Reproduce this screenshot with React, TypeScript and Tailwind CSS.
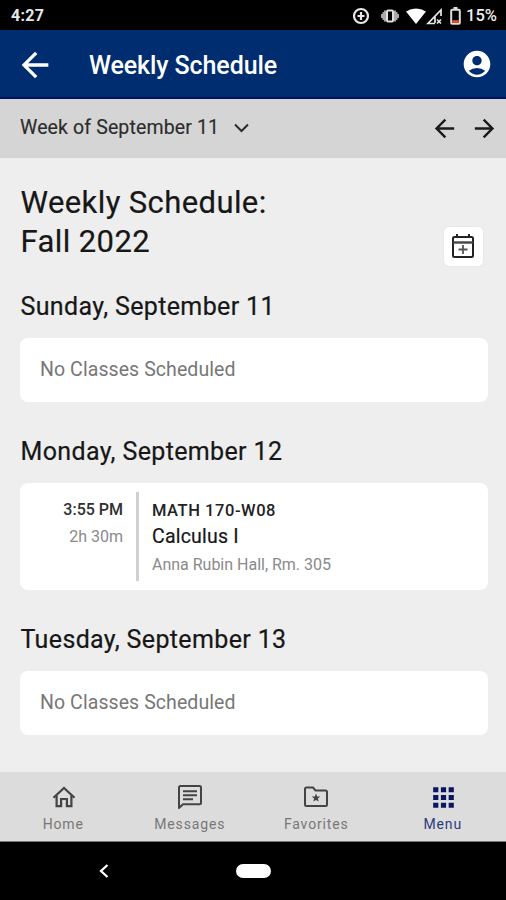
import type { ReactNode } from "react";
import { MdAccountCircle, MdApps, MdArrowBack, MdArrowForward } from "react-icons/md";

function StatusBar() {
  return (
    <div className="flex h-[30px] shrink-0 items-center justify-between bg-black pt-[2px] pr-[9px] pl-[11px] text-white">
      <span className="text-[16px] leading-[28px] font-bold tracking-[0.3px] text-[#e8e8e8]">4:27</span>
      <div className="flex h-[28px] items-center">
        <svg className="mr-[11px]" width="18" height="18" viewBox="0 0 18 18" fill="none" stroke="#e8e8e8">
          <circle cx="9" cy="9" r="7" strokeWidth="2.2" />
          <path d="M9 5v8M5.500 9h7" strokeWidth="2.200" />
        </svg>
        <svg className="mr-[7px]" width="18" height="14" viewBox="0 0 18 14">
          <path d="M5 1.500v11H3V11H1.500V9H0V5h1.500V3H3V1.500zM13 1.500v11h2V11h1.500V9H18V5h-1.500V3H15V1.500z" fill="#aaa" />
          <rect x="6" y="1.500" width="6" height="11" rx="1" fill="none" stroke="#e0e0e0" strokeWidth="2" />
        </svg>
        <svg width="20" height="17" viewBox="0 0 20 17" fill="#fff">
          <path d="M0 3.500Q10-2.500 20 3.500L10 16Z" />
        </svg>
        <svg className="mr-[7px]" width="17" height="17" viewBox="0 0 17 17" fill="none" stroke="#e8e8e8" strokeWidth="1.700">
          <path d="M15 8V2L2 15.500h7M9 9v6" />
          <path d="M11 11.500l4 4M15 11.500l-4 4" />
        </svg>
        <svg className="mr-[5px]" width="11" height="18" viewBox="0 0 11 18">
          <path d="M3.500 0h4v3h-4z" fill="#ddd" />
          <rect x="1.200" y="2.700" width="8.600" height="14" rx="1" fill="none" stroke="#ddd" strokeWidth="2" />
          <path d="M2.200 13.200h6.600V15.800H2.200z" fill="#e9532f" />
        </svg>
        <span className="text-[16.500px] leading-[28px] font-medium tracking-[0px] text-[#ededed]">15%</span>
      </div>
    </div>
  );
}

function DayHeading({ children }: { children: ReactNode }) {
  return (
    <h2 className="pt-px pl-[0.5px] text-[25px] leading-[31px] tracking-[0.360px] whitespace-nowrap text-[#171717] [-webkit-text-stroke:0.200px_#171717]">
      {children}
    </h2>
  );
}

function EmptyDay() {
  return (
    <div className="flex h-[64px] items-center rounded-[8px] bg-white pl-5 text-[19.5px] tracking-[0.080px] text-[#777]">
      <span className="-mt-px">No Classes Scheduled</span>
    </div>
  );
}

function NavItem({ icon, label, active = false }: { icon: ReactNode; label: string; active?: boolean }) {
  return (
    <div className={`flex flex-1 flex-col items-center pt-[11px] ${active ? "text-[#0b1560]" : "text-[#444]"}`}>
      <div className="flex h-[28px] items-center justify-center">{icon}</div>
      <span className={`mt-[4px] text-[14px] leading-[18px] tracking-[0.850px] ${active ? "text-[#2d3a7c]" : "text-[#777]"}`}>{label}</span>
    </div>
  );
}

export default function App() {
  return (
    <div className="flex h-[900px] w-[506px] flex-col overflow-hidden bg-[#eee] font-['Roboto',sans-serif]">
      <StatusBar />
      <header className="flex h-[69px] shrink-0 items-center border-b-2 border-[#03105c] bg-[#002d70] pr-[13px] pl-[15px] text-white">
        <MdArrowBack className="mt-[2px]" size={40} />
        <h1 className="mt-[5px] ml-[34px] text-[25px] leading-[34px] font-medium tracking-[-0.100px] whitespace-nowrap">Weekly Schedule</h1>
        <MdAccountCircle className="mt-px ml-auto" size={32} />
      </header>
      <div className="flex h-[59px] shrink-0 items-center bg-[#d5d5d5] pr-[7px] pb-px pl-[20px] text-[#2c2c2c]">
        <span className="-mt-px text-[19.500px] leading-[26px] tracking-[0.130px] whitespace-nowrap [-webkit-text-stroke:0.150px_#2c2c2c]">Week of September 11</span>
        <svg className="ml-[15px]" width="15" height="10" viewBox="0 0 15 10" fill="none" stroke="currentColor" strokeWidth="2">
          <path d="M1 1.500l6.500 6.500L14 1.500" />
        </svg>
        <div className="ml-auto flex items-center gap-[11px] text-[#1b1b1b]">
          <MdArrowBack size={29} />
          <MdArrowForward size={29} />
        </div>
      </div>
      <main className="flex min-h-0 flex-1 flex-col pr-[18px] pl-5">
        <div className="mt-[24px] flex h-[84px] justify-between pr-[5px]">
          <div className="pt-px pl-[0.500px] text-[31px] leading-[39px] tracking-[0.400px] text-[#171717] [-webkit-text-stroke:0.200px_#171717]">
            Weekly Schedule:
            <br />
            Fall 2022
          </div>
          <div className="mt-[45px] flex h-[39px] w-[39px] items-center justify-center rounded-[5px] bg-white pr-px pb-px shadow-[0_0_2px_#ddd]">
            <svg width="24" height="26" viewBox="0 0 24 26" fill="none" stroke="#222" strokeWidth="2">
              <rect x="2" y="4" width="20" height="20" rx="1.500" />
              <path d="M2 9.500h20" strokeWidth="2.400" stroke="#444" />
              <path d="M6 1v3M18 1v3" />
              <path d="M12 12v9M7.500 16.500h9" strokeWidth="1.800" stroke="#555" />
            </svg>
          </div>
        </div>
        <div className="mt-[24px] mb-[16px]">
          <DayHeading>Sunday, September 11</DayHeading>
        </div>
        <EmptyDay />
        <div className="mt-[33px] mb-[16px]">
          <DayHeading>Monday, September 12</DayHeading>
        </div>
        <div className="flex h-[107px] shrink-0 rounded-[8px] bg-white py-[9px]">
          <div className="w-[103px] pt-[6px] text-right text-[16px] whitespace-nowrap">
            <div className="leading-[24px] font-medium text-[#303030]">3:55 PM</div>
            <div className="mt-[2px] leading-[26px] text-[#8a8a8a]">2h 30m</div>
          </div>
          <div className="ml-[13px] w-[3px] bg-[#d0d0d0]" />
          <div className="pt-[7px] pl-[13px] whitespace-nowrap">
            <div className="text-[16.5px] leading-[24px] font-medium tracking-[0.550px] text-[#222]">MATH 170-W08</div>
            <div className="text-[19.500px] leading-[27px] tracking-[0.200px] text-[#171717] [-webkit-text-stroke:0.200px_#171717]">Calculus I</div>
            <div className="mt-[2px] text-[16px] leading-[26px] tracking-[-0.010px] text-[#8a8a8a]">Anna Rubin Hall, Rm. 305</div>
          </div>
        </div>
        <div className="mt-[33px] mb-[16px]">
          <DayHeading>Tuesday, September 13</DayHeading>
        </div>
        <EmptyDay />
      </main>
      <nav className="flex h-[70px] shrink-0 border-b border-[#777] bg-[#dcdcdc]">
        <NavItem
          label="Home"
          icon={
            <svg className="ml-px" width="24" height="24" viewBox="0 0 24 24" fill="none" stroke="currentColor" strokeWidth="2.200">
              <path d="M1.500 12.800L12 3l10.500 9.800" />
              <path d="M4.600 10.500V21.200h4.500v-7.200h5.800v7.200h4.500V10.500" />
            </svg>
          }
        />
        <NavItem
          label="Messages"
          icon={
            <svg width="26" height="26" viewBox="0 0 26 26" fill="none" stroke="currentColor" strokeWidth="2">
              <path d="M2 24V3.500Q2 2 3.500 2h19Q24 2 24 3.500v15.200q0 1.500-1.500 1.500H6Z" strokeLinejoin="round" />
              <path d="M6 7.200h14M6 11.200h14M6 15.200h10" strokeWidth="1.900" />
            </svg>
          }
        />
        <NavItem
          label="Favorites"
          icon={
            <svg width="26" height="22" viewBox="0 0 26 22" fill="none" stroke="currentColor" strokeWidth="2">
              <path d="M2 3q0-1.500 1.500-1.500h6.500l2.500 3h10q1.500 0 1.500 1.500v12.500q0 1.500-1.500 1.500h-19Q2 20 2 18.500Z" />
              <path d="M13 7.500l1.200 2.900 3.100.2-2.400 2 .8 3-2.700-1.700-2.700 1.700.8-3-2.400-2 3.100-.2z" fill="currentColor" stroke="none" />
            </svg>
          }
        />
        <NavItem active icon={<MdApps className="ml-px" size={31} />} label="Menu" />
      </nav>
      <div className="flex h-[58px] shrink-0 items-center bg-black pl-[99px]">
        <svg width="10" height="14" viewBox="0 0 10 14" fill="none" stroke="#fff" strokeWidth="2.300">
          <path d="M8.500 1L2 7l6.500 6" />
        </svg>
        <div className="ml-[127px] h-[14px] w-[35px] rounded-full bg-white" />
      </div>
    </div>
  );
}
